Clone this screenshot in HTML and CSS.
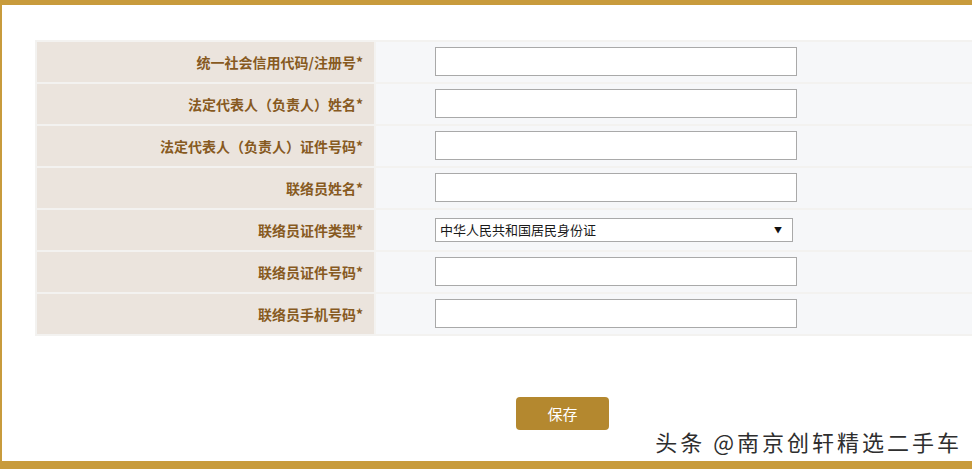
FILE: index.html
```html
<!DOCTYPE html>
<html lang="zh-CN">
<head>
<meta charset="utf-8">
<title>联络员信息</title>
<link rel="stylesheet" href="styles.css">
</head>
<body>
<div class="frame">
  <table class="form-table">
    <tr>
      <th>统一社会信用代码/注册号*</th>
      <td><input class="txt" type="text"></td>
    </tr>
    <tr>
      <th>法定代表人（负责人）姓名*</th>
      <td><input class="txt" type="text"></td>
    </tr>
    <tr>
      <th>法定代表人（负责人）证件号码*</th>
      <td><input class="txt" type="text"></td>
    </tr>
    <tr>
      <th>联络员姓名*</th>
      <td><input class="txt" type="text"></td>
    </tr>
    <tr>
      <th>联络员证件类型*</th>
      <td><span class="sel-wrap"><select class="sel"><option>中华人民共和国居民身份证</option></select></span></td>
    </tr>
    <tr>
      <th>联络员证件号码*</th>
      <td><input class="txt" type="text"></td>
    </tr>
    <tr>
      <th>联络员手机号码*</th>
      <td><input class="txt" type="text"></td>
    </tr>
  </table>
  <div class="actions">
    <button class="save" type="button">保存</button>
  </div>
  <div class="watermark">头条 @南京创轩精选二手车</div>
</div>
</body>
</html>
```

FILE: styles.css
```css
html, body {
  margin: 0;
  padding: 0;
  background: #ffffff;
}
body {
  font-family: "Noto Sans CJK SC", "Noto Sans", sans-serif;
  width: 972px;
  height: 469px;
  overflow: hidden;
}
.frame {
  position: relative;
  border-top: 5px solid #c89b3c;
  border-left: 2px solid #c89b3c;
  border-bottom: 8px solid #c89b3c;
  overflow: hidden;
  padding-top: 35px;
  box-sizing: border-box;
  height: 469px;
}
.form-table {
  margin-left: 33px;
  width: 1100px;
  border-collapse: separate;
  border-spacing: 2px;
  background: #f3f2f0;
}
.form-table th {
  width: 337px;
  height: 40px;
  padding: 0 11px 0 0;
  box-sizing: border-box;
  background: #ebe4dd;
  color: #875a1f;
  font-size: 14px;
  font-weight: bold;
  text-align: right;
  vertical-align: middle;
  line-height: 20px;
}
.form-table td {
  height: 40px;
  padding: 0 0 1px 59px;
  box-sizing: border-box;
  background: #f6f7f9;
  vertical-align: middle;
}
.txt {
  display: block;
  width: 362px;
  height: 29px;
  box-sizing: border-box;
  border: 1px solid #a9a9a9;
  background: #ffffff;
  margin: 0;
  padding: 0 4px;
  font-size: 13px;
}
.sel-wrap {
  position: relative;
  display: block;
  width: 358px;
  height: 24px;
}
.sel {
  display: block;
  width: 358px;
  height: 24px;
  box-sizing: border-box;
  border: 1px solid #a9a9a9;
  border-radius: 0;
  background: #ffffff;
  margin: 0;
  padding: 0 0 0 4px;
  font-family: "Noto Sans CJK SC", sans-serif;
  font-size: 13px;
  color: #1a1a1a;
  appearance: none;
  -webkit-appearance: none;
}
.sel-wrap::after {
  content: "▼";
  position: absolute;
  right: 11px;
  top: 6px;
  font-size: 8px;
  line-height: 12px;
  color: #111111;
  pointer-events: none;
}
.actions {
  padding: 61px 0 0 514px;
}
.save {
  width: 93px;
  height: 33px;
  border: none;
  border-radius: 4px;
  background: #b4882f;
  color: #ffffff;
  font-family: "Noto Sans CJK SC", sans-serif;
  font-size: 15px;
  padding: 0;
}
.watermark {
  position: absolute;
  right: 10px;
  top: 421px;
  font-family: "Noto Sans CJK SC", sans-serif;
  font-size: 22px;
  letter-spacing: 3px;
  line-height: 30px;
  color: #2e2e2e;
  text-shadow: 0 0 2px #ffffff, 0 0 2px #ffffff, 1px 1px 0 #ffffff;
  white-space: nowrap;
}
```
